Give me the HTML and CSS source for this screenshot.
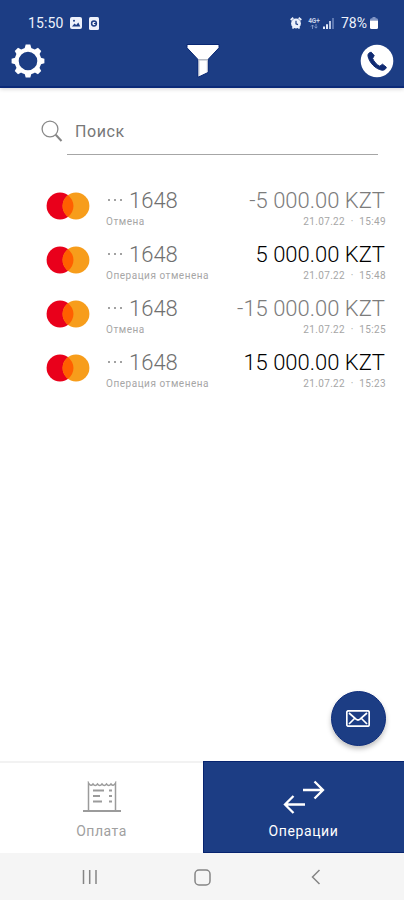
FILE: index.html
```
<!DOCTYPE html>
<html lang="ru">
<head>
<meta charset="utf-8">
<title>Операции</title>
<link rel="stylesheet" href="styles.css">
</head>
<body>
<svg class="defs" width="0" height="0">
  <symbol id="card" viewBox="0 0 44 28">
    <circle cx="14" cy="14" r="13.4" fill="#e9001b"/>
    <circle cx="30" cy="14" r="13.4" fill="#f79d1b"/>
    <path d="M22 3.2a13.4 13.4 0 0 1 0 21.6a13.4 13.4 0 0 1 0-21.6z" fill="#ff5f00"/>
  </symbol>
</svg>
<div class="app">
  <header class="header">
    <div class="status">
      <span class="time">15:50</span>
      <svg class="s-img" width="12" height="12" viewBox="0 0 12 12"><rect width="12" height="12" rx="2" fill="#edf1fb"/><path d="M2 9.5l2.500-3 1.700 1.600L8.300 5.500 10.300 9.500z" fill="#1c3d84"/><circle cx="4" cy="3.700" r="1" fill="#1c3d84"/></svg>
      <svg class="s-app" width="10" height="13" viewBox="0 0 10 13"><rect width="10" height="13" rx="1.500" fill="#edf1fb"/><circle cx="5" cy="6.500" r="2.400" fill="none" stroke="#1c3d84" stroke-width="1.500"/><path d="M5 6.500h2" stroke="#1c3d84"/></svg>
      <span class="grow"></span>
      <svg class="s-alarm" width="12" height="12" viewBox="0 0 12 12"><circle cx="6" cy="6.500" r="4.900" fill="#edf1fb"/><path d="M.7 3L3.300.8M11.300 3L8.700.8M2.500 11.500l1.200-1.500M9.500 11.500L8.300 10" stroke="#edf1fb" stroke-width="1.800"/><path d="M6 3.800v3l2 .8" fill="none" stroke="#1c3d84" stroke-width="1.200"/></svg>
      <span class="net"><span>4G+</span><svg width="8" height="5" viewBox="0 0 8 5"><path d="M2.500 5V1M1 2.500L2.500 1 4 2.500M6 0v4M4.500 2.700L6 4.200l1.500-1.500" fill="none" stroke="#8fa4d2" stroke-width=".8"/></svg></span>
      <svg class="s-signal" width="11" height="11" viewBox="0 0 11 11"><path d="M1 11V8.500M4 11V6.200" stroke="#e3e9f7" stroke-width="2"/><path d="M7 11V3" stroke="#b8c6e4" stroke-width="2"/><path d="M10 11V0" stroke="#6f88bd" stroke-width="1.600"/></svg>
      <span class="pct">78%</span>
      <svg class="s-bat" width="8" height="12" viewBox="0 0 8 12"><path d="M2.500 0h3v1.200h1A1.500 1.500 0 0 1 8 2.700V3.500H0V2.700A1.500 1.500 0 0 1 1.500 1.200h1z" fill="#8296c5"/><path d="M0 3.500h8v7A1.500 1.500 0 0 1 6.500 12h-5A1.500 1.500 0 0 1 0 10.500z" fill="#fff"/></svg>
    </div>
    <div class="tools">
      <svg width="34" height="34" viewBox="-17 -17 34 34">
        <circle r="11.300" fill="none" stroke="#fff" stroke-width="4"/>
        <g fill="#fff"><path id="t" d="M-3.600-12L-2.300-16.400H2.300L3.600-12z"/><use href="#t" transform="rotate(45)"/><use href="#t" transform="rotate(90)"/><use href="#t" transform="rotate(135)"/><use href="#t" transform="rotate(180)"/><use href="#t" transform="rotate(225)"/><use href="#t" transform="rotate(270)"/><use href="#t" transform="rotate(315)"/></g>
      </svg>
      <svg width="34" height="36" viewBox="0 0 34 36"><path d="M1 1.500h32v3.300L22 16.500v13L12 34.300V16.500L1 4.800z" fill="#fff" stroke="#082773"/><path d="M12.300 16.800h9.400" stroke="#a9afba" stroke-width="1.300"/><path d="M13 17v16M21.300 17v12" stroke="#c5c9d2" stroke-width="1"/></svg>
      <svg width="34" height="34" viewBox="0 0 34 34"><circle cx="17" cy="17" r="16.300" fill="#fff"/><path d="M11.200 8.200c-2.200.2-3.600 1.800-3.200 3.900C9.300 18.600 15.300 25 22 26.200c2.100.3 4-1.100 4.300-3l-3.800-3-2.700 2c-3-1.300-6-4.700-7.200-7.800l1.600-2.800z" fill="#102b73" stroke="#102b73" stroke-linejoin="round"/></svg>
    </div>
  </header>

  <main class="content">
    <div class="search">
      <svg width="22" height="23" viewBox="0 0 22 23"><circle cx="9" cy="9" r="7.900" fill="none" stroke="#898989" stroke-width="1.300"/><path d="M14.700 14.800l5.800 6.200" stroke="#858585" stroke-width="2"/></svg>
      <span>Поиск</span>
    </div>
    <div class="line"></div>
    <ul class="list">
      <li class="row">
        <svg class="mc" width="44" height="28"><use href="#card"/></svg>
        <div class="info"><div class="num"><i></i><i></i><i></i><span>1648</span></div><div class="note">Отмена</div></div>
        <div class="sum"><div class="amount muted">-5 000.00 KZT</div><div class="date">21.07.22 &nbsp;·&nbsp; 15:49</div></div>
      </li>
      <li class="row">
        <svg class="mc" width="44" height="28"><use href="#card"/></svg>
        <div class="info"><div class="num"><i></i><i></i><i></i><span>1648</span></div><div class="note">Операция отменена</div></div>
        <div class="sum"><div class="amount">5 000.00 KZT</div><div class="date">21.07.22 &nbsp;·&nbsp; 15:48</div></div>
      </li>
      <li class="row">
        <svg class="mc" width="44" height="28"><use href="#card"/></svg>
        <div class="info"><div class="num"><i></i><i></i><i></i><span>1648</span></div><div class="note">Отмена</div></div>
        <div class="sum"><div class="amount muted">-15 000.00 KZT</div><div class="date">21.07.22 &nbsp;·&nbsp; 15:25</div></div>
      </li>
      <li class="row">
        <svg class="mc" width="44" height="28"><use href="#card"/></svg>
        <div class="info"><div class="num"><i></i><i></i><i></i><span>1648</span></div><div class="note">Операция отменена</div></div>
        <div class="sum"><div class="amount">15 000.00 KZT</div><div class="date">21.07.22 &nbsp;·&nbsp; 15:23</div></div>
      </li>
    </ul>
  </main>

  <div class="fab"><svg width="24" height="17" viewBox="0 0 24 17" fill="none" stroke="#fff" stroke-width="1.700" stroke-linejoin="round"><rect x=".8" y=".8" width="22.400" height="15.400" rx="1.500"/><path d="M3 3l7 6.200q2 1.600 4 0L21 3M3 14l5.500-5.500M21 14l-5.500-5.500"/></svg></div>

  <nav class="tabs">
    <div class="tab pay">
      <svg width="40" height="32" viewBox="0 0 40 32" fill="none" stroke="#9b9b9b" stroke-width="1.500"><path d="M6.500 29.500V2q2.250 4 4.500 1q2.250 3 4.500 0q2.250 3 4.500 0q2.250 3 4.500 0q2.250 3 4.500 0q2.250 3 4.500-1V29.500"/><path d="M1 30h38" stroke-width="2"/><path d="M11 9.500h11M11 15h7M11 20.500h9M27 9.500h3M27 15h3M27 20.500h3" stroke-width="1.800"/></svg>
      <span>Оплата</span>
    </div>
    <div class="tab ops">
      <svg width="42" height="34" viewBox="0 0 42 34" fill="none" stroke="#fff" stroke-width="2.300"><path d="M20 10h20M31.500 1.500L40 10l-8.500 8.500M22 24.500H2M10.500 16L2 24.500l8.500 8.500"/></svg>
      <span>Операции</span>
    </div>
  </nav>
  <div class="sysnav">
    <svg width="16" height="16" viewBox="0 0 16 16"><path d="M1.500 1v14M7.700 1v14M14 1v14" stroke="#858585" stroke-width="1.500"/></svg>
    <svg class="home" width="17" height="17" viewBox="0 0 17 17"><rect x="1" y="1" width="15" height="15" rx="4" fill="none" stroke="#858585" stroke-width="1.500"/></svg>
    <svg width="10" height="16" viewBox="0 0 10 16"><path d="M8.500 1L1.500 8l7 7" fill="none" stroke="#858585" stroke-width="1.500"/></svg>
  </div>
</div>
</body>
</html>
```
FILE: styles.css
```
* { box-sizing: border-box; }
body { margin: 0; background: #fff; font-family: Roboto, "Liberation Sans", sans-serif; }
.defs { display: block; }
.app { position: relative; width: 404px; height: 900px; display: flex; flex-direction: column; overflow: hidden; }
.header { height: 88px; flex: none; background: #1c3d84; border-bottom: 2px solid #0b2a78; box-shadow: 0 1px 4px rgba(0,0,20,.18); }
.status { height: 43px; padding: 3px 26px 0 28px; display: flex; align-items: center; color: #eef2fb; font-size: 14px; line-height: 16px; }
.time { width: 36px; letter-spacing: .1px; }
.s-img { margin-left: 6px; }
.s-app { margin-left: 7px; }
.grow { flex: 1; }
.net { display: flex; flex-direction: column; align-items: center; width: 12px; margin-left: 6px; font-size: 6.5px; line-height: 6px; font-weight: 700; color: #c5d0e9; }
.s-signal { margin: 0 7px 0 3px; }
.pct { width: 28px; letter-spacing: 0; }
.s-bat { margin-left: 1px; }
.tools { height: 36px; padding: 0 10px 0 11px; display: flex; justify-content: space-between; align-items: center; }
.content { flex: 1; }
.search { display: flex; align-items: center; height: 23px; margin: 32px 0 0 41px; gap: 12px; font-size: 16px; letter-spacing: .6px; color: #777; }
.line { height: 1px; margin: 11px 26px 0 67px; background: #a6a6a6; }
.list { list-style: none; margin: 32px 0 0; padding: 0 18px 0 46px; }
.row { display: flex; height: 54px; }
.mc { margin-top: 5px; flex: none; }
.info { margin-left: 16px; flex: none; }
.num { display: flex; align-items: center; gap: 4px; height: 26px; padding-left: 2px; font-size: 22px; font-weight: 300; color: #707070; }
.num i { width: 2px; height: 2px; background: #a2a2a2; }
.num span { margin-left: 3px; }
.note { margin-top: 3px; font-size: 10px; line-height: 12px; letter-spacing: .53px; color: #a6a6a6; white-space: nowrap; }
.sum { flex: 1; text-align: right; }
.amount { height: 26px; line-height: 27px; padding-right: 1px; font-size: 22px; font-weight: 300; color: #000; white-space: nowrap; }
.muted { color: #7c7c7c; }
.date { margin-top: 3px; font-size: 10px; line-height: 12px; letter-spacing: .35px; color: #a6a6a6; }
.fab { position: absolute; left: 331px; top: 691px; width: 55px; height: 55px; padding-right: 2px; border-radius: 50%; background: #1c3d84; border: 1px solid #0d2c7b; display: flex; align-items: center; justify-content: center; box-shadow: 0 3px 5px rgba(0,0,0,.25); }
.tabs { height: 92px; flex: none; display: flex; }
.tab { display: flex; flex-direction: column; align-items: center; font-size: 14px; line-height: 18px; }
.pay { width: 203px; border-top: 2px solid #f2f2f2; color: #a0a0a0; padding-top: 18px; letter-spacing: .5px; }
.pay span { margin-top: 9px; }
.ops { flex: 1; background: #1c3d84; border: 1px solid #07246f; border-right: 0; color: #fff; padding: 18px 1px 0 0; letter-spacing: .6px; }
.ops span { margin-top: 8px; }
.sysnav { height: 47px; flex: none; background: #f5f5f5; display: flex; align-items: center; justify-content: space-between; padding: 1px 83px 0 82px; }
.home { margin-right: 4px; }
```
